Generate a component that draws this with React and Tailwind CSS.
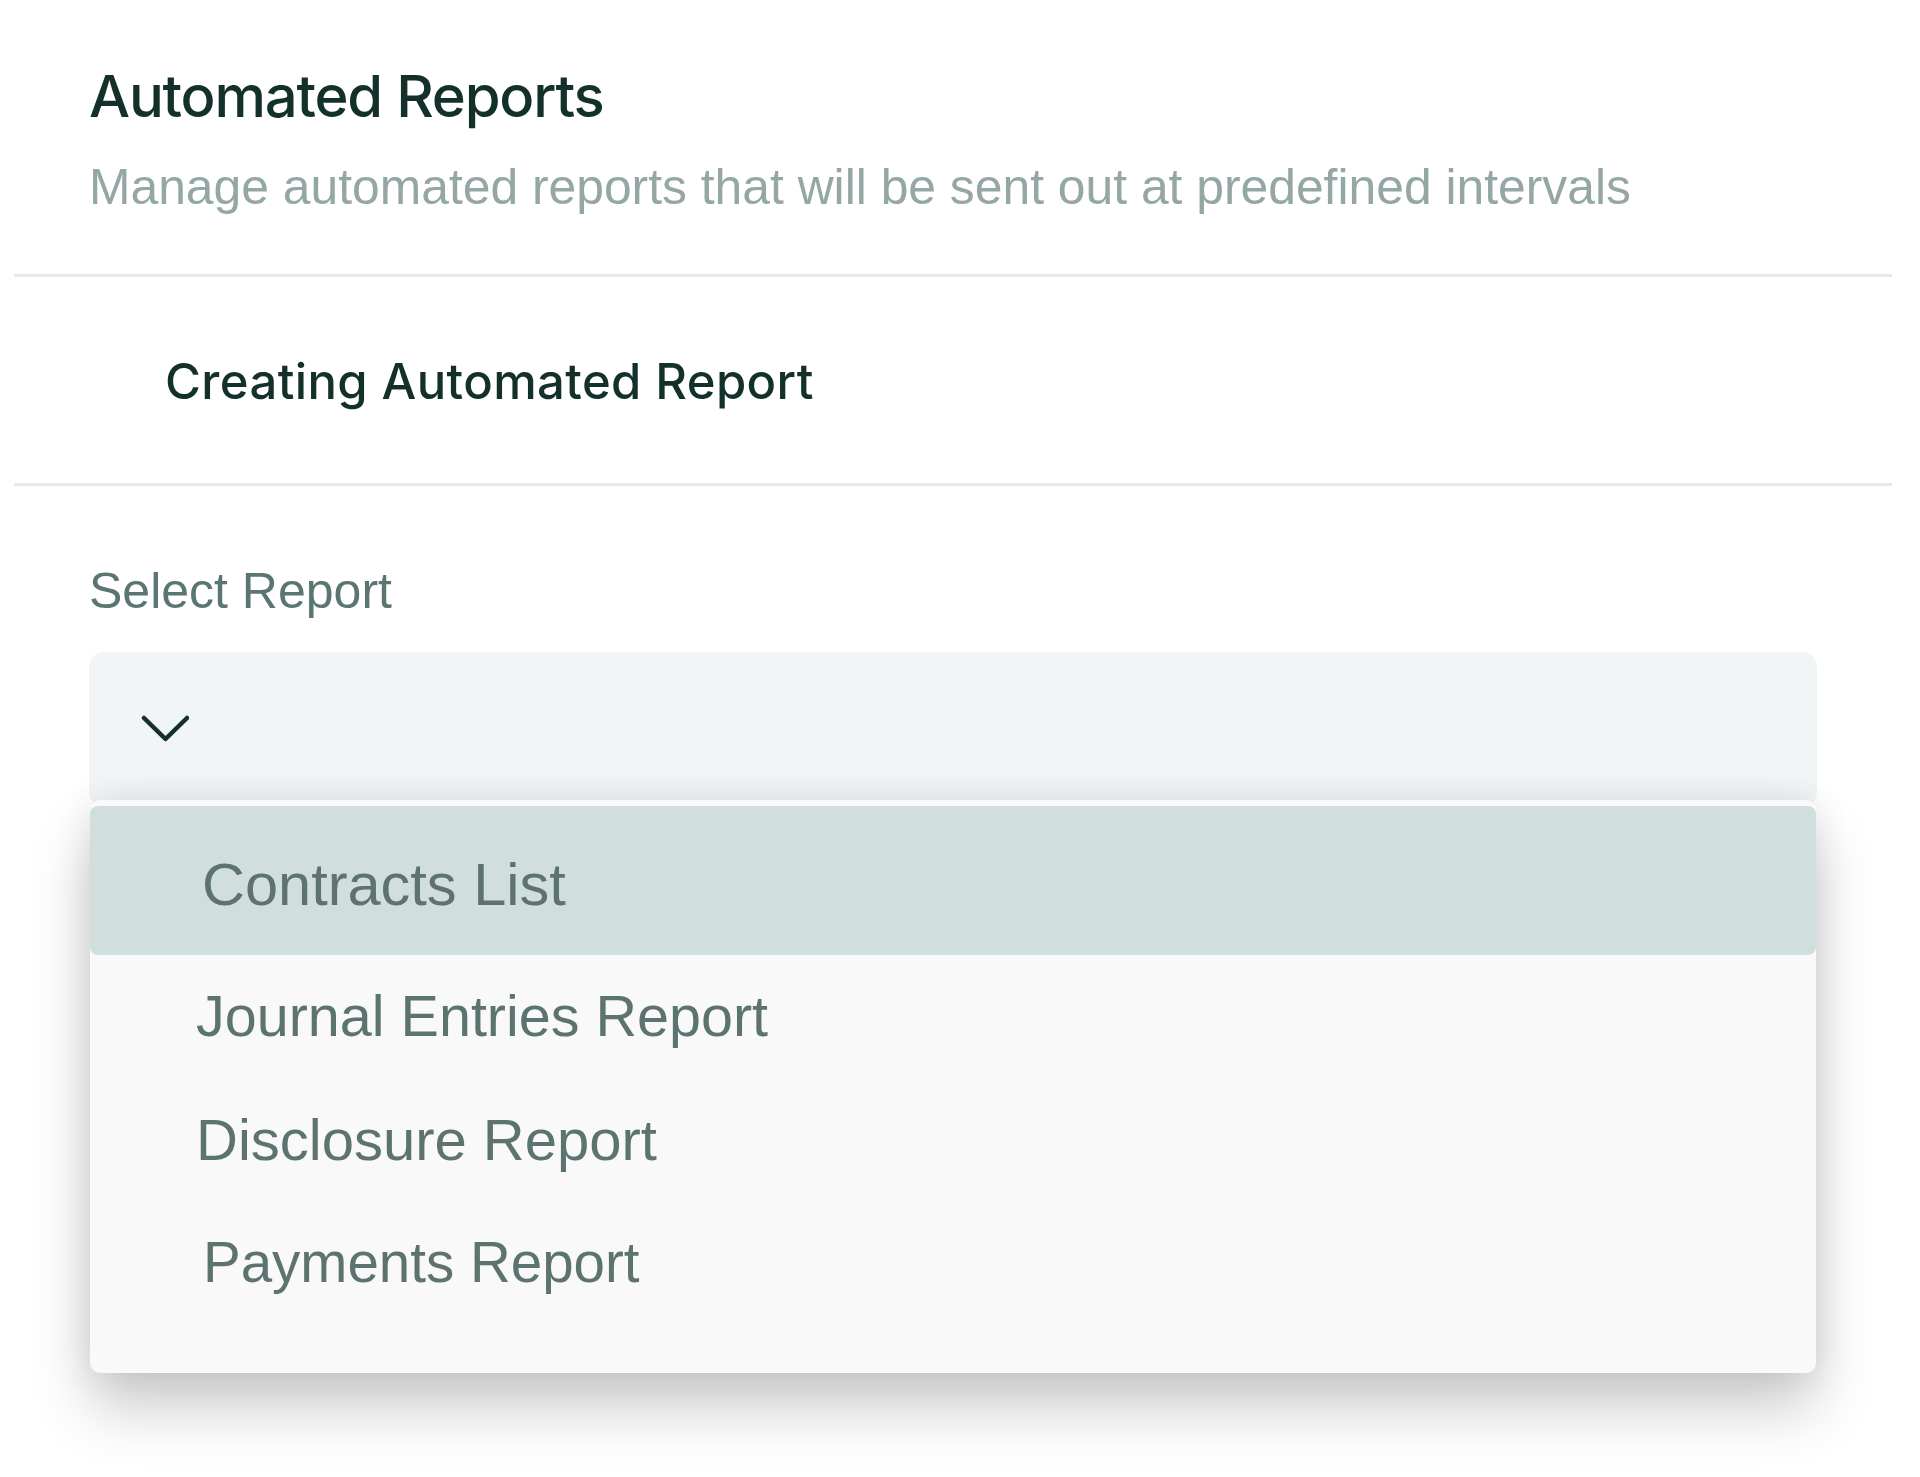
import React from "react";

const items = [
  { label: "Contracts List", active: true, pl: "pl-[112px]", size: "text-[59.5px]" },
  { label: "Journal Entries Report", pl: "pl-[106px]", size: "text-[57.5px]" },
  { label: "Disclosure Report", pl: "pl-[106px]", size: "text-[58px]" },
  { label: "Payments Report", pl: "pl-[113px]", size: "text-[56.5px]" },
];

export default function App() {
  return (
    <div className="w-[1920px] h-[1477px] bg-white overflow-hidden font-['Liberation_Sans',Arial,sans-serif]">
      <div className="pl-[89px] pt-[61px]">
        <h1 className="font-['Inter',sans-serif] font-medium text-[58px] leading-[70px] tracking-[-1.2px] text-[#13302a]">
          Automated Reports
        </h1>
        <p className="mt-[28px] text-[49.8px] leading-[56px] text-[#94a7a5]">
          Manage automated reports that will be sent out at predefined intervals
        </p>
      </div>
      <div className="mt-[59px] ml-[14px] w-[1878px] h-[3px] bg-[#e9e9e9]" />
      <div className="pt-[76px] pb-[72px] pl-[165px]">
        <h2 className="font-['Inter',sans-serif] font-medium text-[49px] leading-[58px] tracking-[0.4px] text-[#13302a]">
          Creating Automated Report
        </h2>
      </div>
      <div className="ml-[14px] w-[1878px] h-[3px] bg-[#e9e9e9]" />
      <div className="pl-[89px]">
        <div className="mt-[77px] text-[50px] leading-[56px] text-[#5b7572]">Select Report</div>
        <div className="relative mt-[33px] w-[1728px]">
          <div className="h-[155px] rounded-[15px] bg-[#f1f5f5] pt-[63px] pl-[52px]">
            <svg width="48" height="30" viewBox="0 0 48 30" fill="none">
              <polyline
                points="3,3 24.5,24 46,3"
                stroke="#13302a"
                strokeWidth="4.5"
                strokeLinecap="round"
                strokeLinejoin="round"
              />
            </svg>
          </div>
          <div className="absolute left-[1px] right-[1px] top-[148px] h-[573px] rounded-[10px] bg-[#f9f9f9] pt-[6px] shadow-[0_36px_60px_rgba(0,0,0,0.2),0_0_36px_rgba(0,0,0,0.09)]">
            {items.map((it, i) =>
              it.active ? (
                <div
                  key={it.label}
                  className={`h-[149px] rounded-[8px] bg-[#d1dede] pt-[46px] ${it.pl} ${it.size} leading-[66px] text-[#5c7370]`}
                >
                  {it.label}
                </div>
              ) : (
                <div
                  key={it.label}
                  className={`h-[124px] ${i === 3 ? "pt-[27px]" : "pt-[28px]"} ${it.pl} ${it.size} leading-[66px] text-[#5c7370]`}
                >
                  {it.label}
                </div>
              )
            )}
          </div>
        </div>
      </div>
    </div>
  );
}
